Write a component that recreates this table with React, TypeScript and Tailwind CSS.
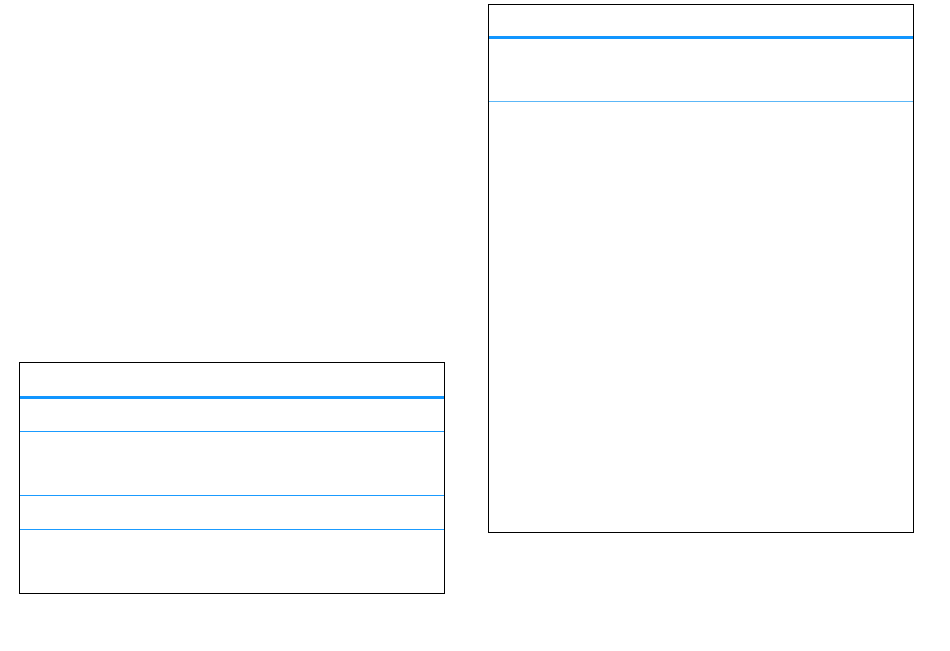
import React from "react";

const App: React.FC = () => {
  return (
    <div className="w-[950px] h-[651px] bg-white flex items-start gap-[43px] pl-[19px] font-['Liberation_Sans',sans-serif]">
      {/* Left table */}
      <div className="pt-[362px]">
        <div className="w-[426px] border border-black bg-white flex flex-col">
          <div className="h-[33px] shrink-0" />
          <div className="h-[3px] shrink-0 bg-[#1196ff]" />
          <div className="h-[32px] shrink-0" />
          <div className="h-[64px] shrink-0 border-t border-[#1a9bff]" />
          <div className="h-[34px] shrink-0 border-t border-[#1a9bff]" />
          <div className="h-[64px] shrink-0 border-t border-[#1a9bff]" />
        </div>
      </div>

      {/* Right table */}
      <div className="pt-[4px]">
        <div className="w-[426px] border border-black bg-white flex flex-col">
          <div className="h-[31px] shrink-0" />
          <div className="h-[3px] shrink-0 bg-[#1196ff]" />
          <div className="h-[62px] shrink-0" />
          <div className="h-[431px] shrink-0 border-t border-[#5cb7f7]" />
        </div>
      </div>
    </div>
  );
};

export default App;
